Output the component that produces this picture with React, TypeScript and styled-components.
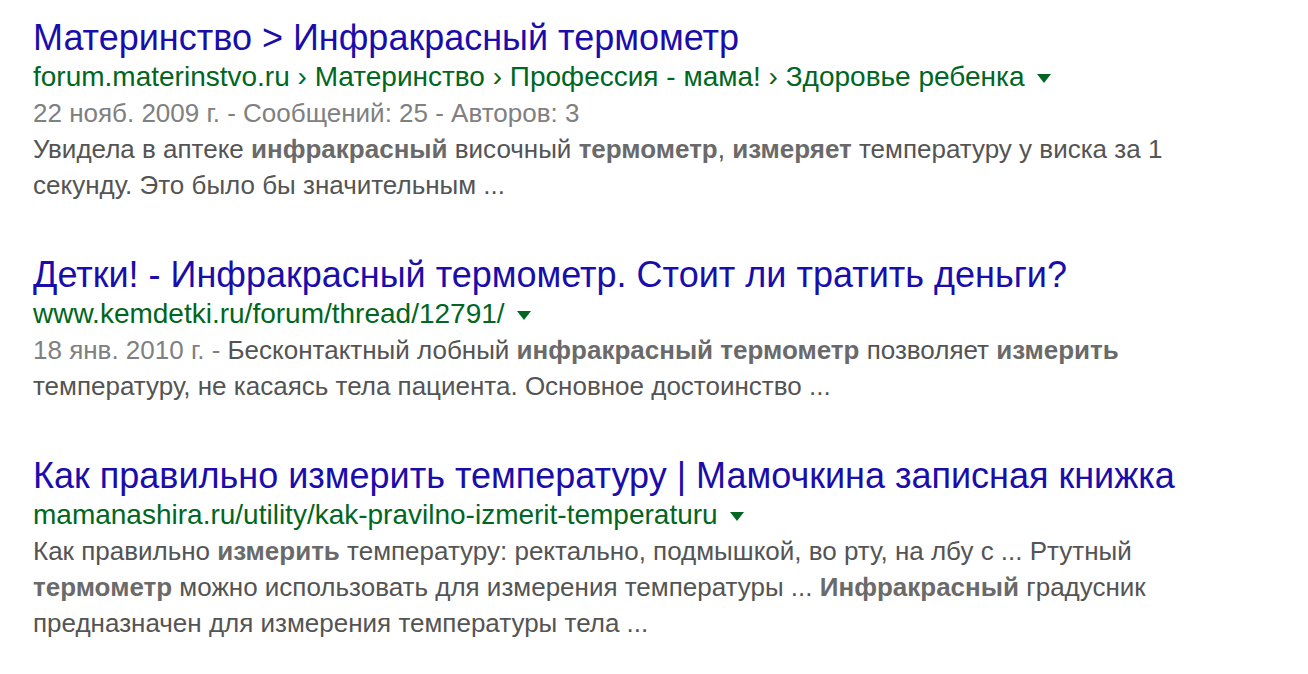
import React from "react";
import styled, { createGlobalStyle } from "styled-components";

const Global = createGlobalStyle`
  html, body { margin: 0; padding: 0; background: #fff; }
  body { font-family: "Liberation Sans", Arial, sans-serif; }
`;

const Page = styled.div`
  padding: 16px 0 0 33px;
  display: flex;
  flex-direction: column;
  gap: 50px;
`;

const Result = styled.div`
  display: flex;
  flex-direction: column;
`;

const Title = styled.a`
  font-size: 36px;
  line-height: 43px;
  color: #1a0dab;
  text-decoration: none;
  white-space: nowrap;
`;

const UrlRow = styled.div`
  display: flex;
  align-items: center;
  font-size: 28px;
  line-height: 36px;
  color: #006621;
  white-space: nowrap;
`;

const Arrow = styled.span`
  display: inline-block;
  width: 0;
  height: 0;
  margin-left: 12px;
  margin-top: 3px;
  border-left: 7px solid transparent;
  border-right: 7px solid transparent;
  border-top: 9px solid #006621;
`;

const Snippet = styled.div`
  font-size: 26px;
  line-height: 36px;
  color: #545454;
  white-space: nowrap;

  b {
    font-weight: bold;
    color: #6a6a6a;
  }
`;

const DateLine = styled.span`
  color: #808080;
`;

const Line = styled.div``;

export default function App() {
  return (
    <>
      <Global />
      <Page>
        <Result>
          <Title href="#">Материнство &gt; Инфракрасный термометр</Title>
          <UrlRow>
            forum.materinstvo.ru › Материнство › Профессия - мама! › Здоровье ребенка
            <Arrow />
          </UrlRow>
          <Snippet>
            <Line>
              <DateLine>22 нояб. 2009 г. - Сообщений: 25 - Авторов: 3</DateLine>
            </Line>
            <Line>
              Увидела в аптеке <b>инфракрасный</b> височный <b>термометр</b>, <b>измеряет</b> температуру у виска за 1
            </Line>
            <Line>секунду. Это было бы значительным ...</Line>
          </Snippet>
        </Result>
        <Result>
          <Title href="#">Детки! - Инфракрасный термометр. Стоит ли тратить деньги?</Title>
          <UrlRow>
            www.kemdetki.ru/forum/thread/12791/
            <Arrow />
          </UrlRow>
          <Snippet>
            <Line>
              <DateLine>18 янв. 2010 г. - </DateLine>Бесконтактный лобный <b>инфракрасный термометр</b> позволяет <b>измерить</b>
            </Line>
            <Line>температуру, не касаясь тела пациента. Основное достоинство ...</Line>
          </Snippet>
        </Result>
        <Result>
          <Title href="#">Как правильно измерить температуру | Мамочкина записная книжка</Title>
          <UrlRow>
            mamanashira.ru/utility/kak-pravilno-izmerit-temperaturu
            <Arrow />
          </UrlRow>
          <Snippet>
            <Line>
              Как правильно <b>измерить</b> температуру: ректально, подмышкой, во рту, на лбу с ... Ртутный
            </Line>
            <Line>
              <b>термометр</b> можно использовать для измерения температуры ... <b>Инфракрасный</b> градусник
            </Line>
            <Line>предназначен для измерения температуры тела ...</Line>
          </Snippet>
        </Result>
      </Page>
    </>
  );
}
